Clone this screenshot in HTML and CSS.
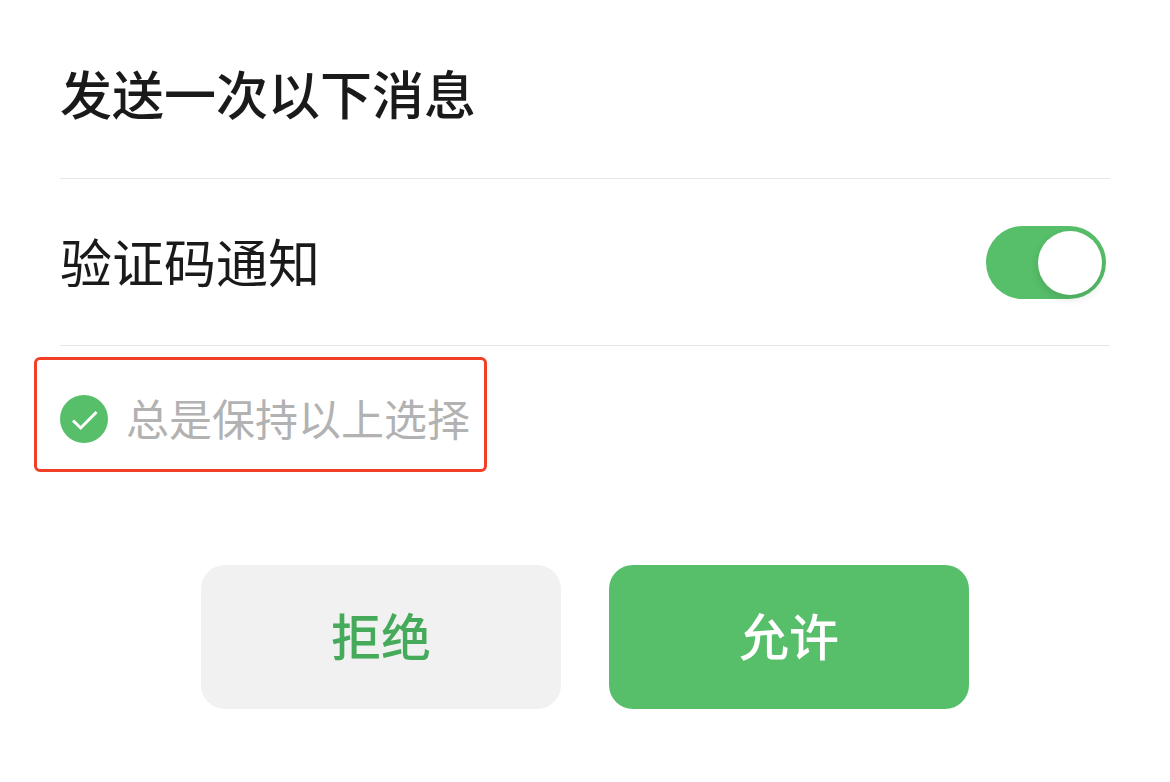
FILE: index.html
```html
<!DOCTYPE html>
<html lang="zh-CN">
<head>
<meta charset="utf-8">
<meta name="viewport" content="width=device-width, initial-scale=1">
<title>发送一次以下消息</title>
<link rel="stylesheet" href="styles.css">
</head>
<body>
<form class="sheet">
  <h1 class="title">发送一次以下消息</h1>
  <label class="row">
    <span class="row-label">验证码通知</span>
    <input class="switch" type="checkbox" role="switch" checked>
  </label>
  <label class="keep">
    <span class="tick">
      <input class="tick-input" type="checkbox" checked>
      <svg class="tick-mark" viewBox="0 0 48 48" aria-hidden="true"><path d="M13 25.500l7.700 7.500L36.500 17"/></svg>
    </span>
    <span class="keep-label">总是保持以上选择</span>
  </label>
  <div class="actions">
    <button class="button button-deny" type="button">拒绝</button>
    <button class="button button-allow" type="button">允许</button>
  </div>
</form>
</body>
</html>
```

FILE: styles.css
```css
* {
  box-sizing: border-box;
}

body {
  margin: 0;
  background: #fff;
  color: #1a1a1a;
  font-family: "Noto Sans CJK SC", sans-serif;
}

.sheet {
  padding: 12px 60px 72px;
}

.title {
  margin: 0;
  padding: 46px 0 50px;
  border-bottom: 1px solid #e6e6e6;
  font-size: 52px;
  line-height: 70px;
  font-weight: 500;
}

.row {
  display: flex;
  align-items: center;
  justify-content: space-between;
  padding: 47px 4px 46px 0;
  border-bottom: 1px solid #e6e6e6;
  font-size: 52px;
  line-height: 68px;
}

.row-label {
  padding-bottom: 4px;
}

.switch {
  appearance: none;
  display: flex;
  justify-content: flex-end;
  width: 120px;
  height: 73px;
  margin: 0;
  padding: 5px 4px;
  border-radius: 37px;
  background: #57be6a;
}

.switch::before {
  content: "";
  width: 64px;
  height: 64px;
  border-radius: 50%;
  background: #fff;
  box-shadow: 0 4px 8px rgba(0, 0, 0, 0.12);
}

.keep {
  display: flex;
  align-items: center;
  gap: 18px;
  width: fit-content;
  margin: 11px 0 0 -26px;
  padding: 29px 14px 20px 23px;
  border: 3px solid #f24026;
  border-radius: 6px;
}

.tick {
  display: grid;
}

.tick-input,
.tick-mark {
  grid-area: 1 / 1;
  width: 48px;
  height: 48px;
}

.tick-input {
  appearance: none;
  margin: 0;
  border-radius: 50%;
  background: #57be6a;
}

.tick-mark {
  fill: none;
  stroke: #fff;
  stroke-width: 3;
  pointer-events: none;
}

.keep-label {
  padding-bottom: 4px;
  color: #b2b2b2;
  font-size: 43px;
  line-height: 56px;
}

.actions {
  display: flex;
  justify-content: center;
  gap: 48px;
  margin-top: 93px;
}

.button {
  width: 360px;
  padding: 33px 0 39px;
  border: 0;
  border-radius: 24px;
  font-family: inherit;
  font-size: 50px;
  line-height: 72px;
  font-weight: 500;
}

.button-deny {
  background: #f1f1f1;
  color: #46aa5b;
}

.button-allow {
  background: #57be6a;
  color: #fff;
}
```
